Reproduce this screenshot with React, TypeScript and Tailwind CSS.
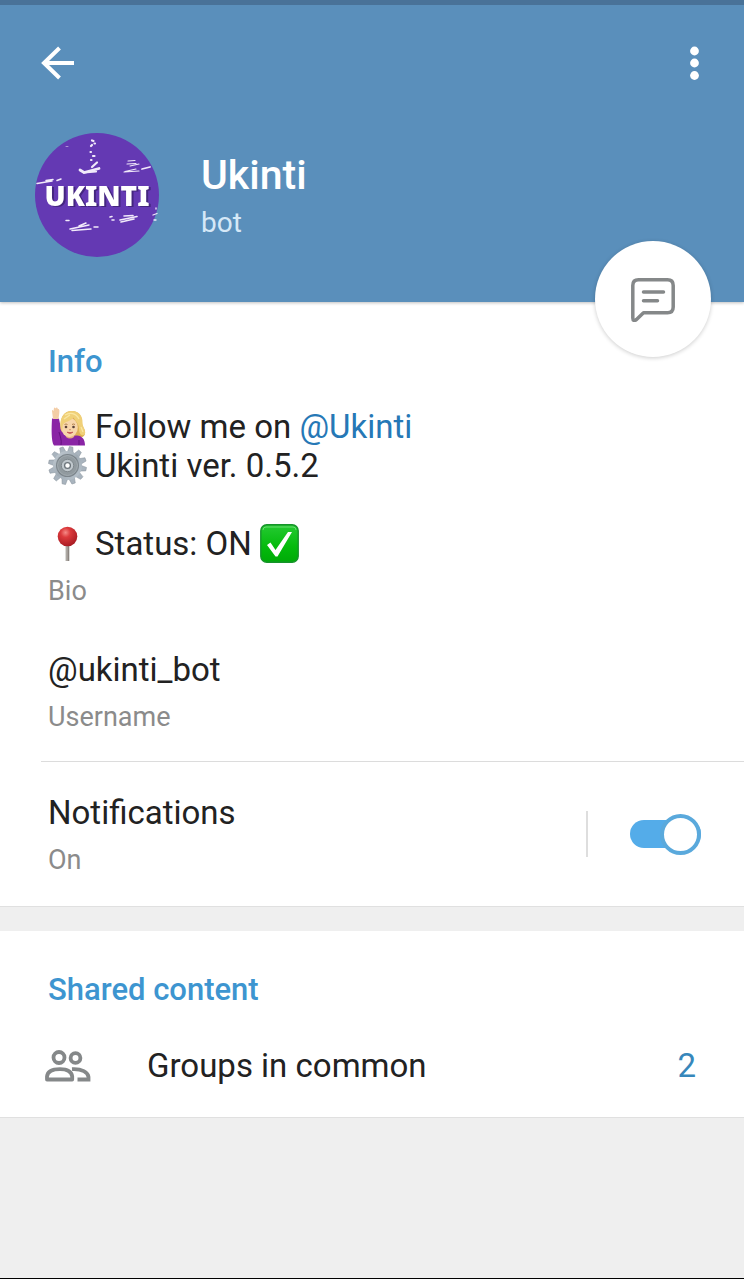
import { useState, type ReactNode } from 'react';

function BackIcon() {
  return (
    <svg className="h-9 w-9" viewBox="0 0 36 36" fill="none" stroke="currentColor" strokeWidth="4">
      <path d="M4 18H34M19.5 3L4 18L19.5 33" />
    </svg>
  );
}

function DotsIcon() {
  return (
    <svg className="h-9 w-9" viewBox="0 0 36 36" fill="currentColor">
      <circle cx="18.5" cy="6" r="4.4" />
      <circle cx="18.5" cy="18" r="4.4" />
      <circle cx="18.5" cy="30.5" r="4.4" />
    </svg>
  );
}

function MessageIcon() {
  return (
    <svg
      className="h-11 w-11"
      viewBox="0 0 44 44"
      fill="none"
      stroke="currentColor"
      strokeWidth="3.5"
      strokeLinecap="round"
      strokeLinejoin="round"
    >
      <path d="M7.5 1.8H36.5Q42.2 1.8 42.2 7.5V29Q42.2 34.700 36.500 34.700H12.500L5.500 41.500Q1.800 44 1.800 40V7.500Q1.800 1.800 7.500 1.800Z" />
      <path d="M12.500 14H32.500M12.500 22.800H26.500" />
    </svg>
  );
}

function GroupIcon() {
  return (
    <svg className="h-8 w-[46px]" viewBox="0 0 46 32" fill="none" stroke="currentColor" strokeWidth="3.8">
      <circle cx="14" cy="7.5" r="5.5" />
      <circle cx="30.5" cy="8" r="4.900" />
      <path d="M2 29.500V26.500C2.500 21.500 8 19.200 15 19.200S26.500 21.500 27.200 26.500V29.500Z" strokeLinejoin="round" />
      <path d="M27 19.200C37 18.600 43 22.500 43.500 27V29.500H32.500" />
    </svg>
  );
}

function Avatar() {
  return (
    <svg className="h-[124px] w-[124px] shrink-0" viewBox="0 0 124 124" role="img" aria-label="Ukinti">
      <circle cx="62" cy="62" r="62" fill="#6439b3" />
      <g fill="none" stroke="#f1eafa" strokeLinecap="round">
        <path d="M45 37L49 39.500L64 35.500" strokeWidth="2.800" />
        <path d="M57 34L62 29.500M49 39.500L61 38.500" strokeWidth="2.200" />
        <path d="M57 7.500L58.500 8M59.500 10.500H60M56 13L57 12M55.500 19H56M58 23H59.500M56 27H56.500" strokeWidth="2.200" />
        <path d="M93 28L100 27.500M92 31L101 30.500M95 33L104 31M90 38.500L101 36M89 39L104 38" strokeWidth="1.100" />
        <path d="M107 36L115 34" strokeWidth="1.800" />
        <path d="M2 50.500L17 48M11 47.500L18 46.500M22 47.500L26 46" strokeWidth="1.500" />
        <path d="M31 87.500H34M44 93L51 90M35 96L54 92M37 97.500L56 96M59 94H63" strokeWidth="1.500" />
        <path d="M75 84L77 83.500M77 87H79M85 87L102 83.500M86 89L99 86M89 83L98 82.500" strokeWidth="1.600" />
        <path d="M118 82L122 80.500M119 87H121M121 76V75" strokeWidth="1.300" />
        <path d="M31 13.500H33" strokeWidth="1" opacity="0.5" />
      </g>
      <text
        x="62"
        y="73"
        textAnchor="middle"
        fontSize="28"
        fill="#ffffff"
        className="font-['Noto_Sans',sans-serif] font-black drop-shadow-[2px_1px_0_#44267f]"
      >
        UKINTI
      </text>
    </svg>
  );
}

function RaisedHandEmoji() {
  return (
    <svg className="h-[39px] w-[39px] shrink-0" viewBox="0 0 39 39" role="img" aria-label="Woman raising hand">
      <path d="M13 20C12 10 16 4 24 4C31 4 34 9 34 15C34 21 38 22 37 27C36 31 31 31 27 31L14 27Z" fill="#dfb055" />
      <path d="M4 12C6 10 9 10 11 12L13 21C14 25 17 28 21 29L29 28.500C34 29 37 32 37 38.500H6C3 35 3.500 20 4 12Z" fill="#8a25a5" />
      <path d="M11 25C12 29 14 33 13 38M31 33V38" fill="none" stroke="#65127f" strokeWidth="1" />
      <path d="M5 12L4 4Q4 2 5.500 4L6 1Q7 0 7.500 1.500L8.500 0.500Q9.800 0 9.800 2L10.800 2Q11.800 3 11.300 6L10.500 12Z" fill="#f3cda6" />
      <path d="M17 26H27L26 30Q22 33 18 30Z" fill="#e5ae80" />
      <ellipse cx="21.500" cy="20.500" rx="8.300" ry="9.700" fill="#f8d6ab" />
      <path d="M12.500 22C11 11 16 4 24 4C31 4 35 9 34.500 16C34.500 20 38 22 37 27C34 30 31 27 31 22C31 17 28 15 25.500 10.500C22 15 17 14 14.800 18L14 25Z" fill="#f0d078" />
      <path d="M17 8C22 5 28 6 31 12M16 12L22 8M33 20L35 25" fill="none" stroke="#fae7a2" strokeWidth="1.300" />
      <circle cx="18" cy="20" r="1.300" fill="#594037" />
      <circle cx="25.500" cy="20" r="1.300" fill="#594037" />
      <path d="M16.500 17.500Q18 16.500 19.500 17.500M24 17.500Q25.500 16.500 27 17.500" fill="none" stroke="#a97845" strokeWidth="0.900" />
      <path d="M21 22.500Q22 23.300 23 22.500" fill="none" stroke="#cc9368" strokeWidth="0.900" />
      <path d="M19 25.200Q22 27.800 25 25.200Q22 26 19 25.200Z" fill="#bd4c4b" stroke="#bd4c4b" strokeWidth="0.600" />
    </svg>
  );
}

function GearEmoji() {
  const teeth = Array.from({ length: 12 }, (_, i) => i * 30 + 12);
  return (
    <svg className="h-[39px] w-[39px] shrink-0" viewBox="0 0 39 39" role="img" aria-label="Gear">
      <defs>
        <linearGradient id="gear" x1="0" y1="0" x2="1" y2="1">
          <stop offset="0" stopColor="#c6cfd6" />
          <stop offset="0.5" stopColor="#a0abb4" />
          <stop offset="1" stopColor="#bcc7d0" />
        </linearGradient>
      </defs>
      {teeth.map((angle) => (
        <path
          key={angle}
          d="M16.5 7L17.500 0.500H21L22.500 7Z"
          fill="#a9b4be"
          stroke="#87929b"
          strokeWidth="0.5"
          transform={`rotate(${angle} 19.5 19.5)`}
        />
      ))}
      <circle cx="19.5" cy="19.5" r="14.5" fill="url(#gear)" />
      <circle cx="19.5" cy="19.5" r="11.5" fill="#7c858b" />
      <circle cx="19.5" cy="19.5" r="10" fill="#919a9f" stroke="#a9b2b8" strokeWidth="0.8" />
      <circle cx="19.5" cy="19.5" r="6.2" fill="#bfc7cc" stroke="#737c82" strokeWidth="0.8" />
      <circle cx="19.5" cy="19.5" r="2.900" fill="#ffffff" stroke="#6a7379" strokeWidth="1.3" />
    </svg>
  );
}

function PinEmoji() {
  return (
    <svg className="h-[39px] w-[39px] shrink-0" viewBox="0 0 39 39" role="img" aria-label="Pin">
      <defs>
        <radialGradient id="pin" cx="0.4" cy="0.3" r="0.7">
          <stop offset="0" stopColor="#f58a86" />
          <stop offset="0.35" stopColor="#dc3a3c" />
          <stop offset="1" stopColor="#a91c24" />
        </radialGradient>
      </defs>
      <path d="M17.700 18H21.300V37H17.700Z" fill="#8b8580" />
      <path d="M18.300 20H19.500V37H18.300Z" fill="#bdb8b3" />
      <circle cx="19.500" cy="12.500" r="9.800" fill="url(#pin)" />
    </svg>
  );
}

function CheckEmoji() {
  return (
    <svg className="h-[39px] w-[39px] shrink-0" viewBox="0 0 39 39" role="img" aria-label="Check mark">
      <defs>
        <linearGradient id="check" x1="0" y1="0" x2="0" y2="1">
          <stop offset="0" stopColor="#25ca32" />
          <stop offset="0.6" stopColor="#04ba0c" />
          <stop offset="1" stopColor="#00aa08" />
        </linearGradient>
      </defs>
      <rect x="0.800" y="0.800" width="37.400" height="37.400" rx="6" fill="url(#check)" stroke="#16942a" strokeWidth="1.400" />
      <path d="M3 6Q3 3 6 3H33Q36 3 36 6" fill="none" stroke="#7be280" strokeWidth="0.800" />
      <path d="M7 21L10.500 18.500L15.500 26L28 8H32L17.500 32.500H15.500Z" fill="#ffffff" />
    </svg>
  );
}

function Field({ label, children }: { label: string; children: ReactNode }) {
  return (
    <div>
      <div className="text-[33px] leading-[39px] text-[#222222]">{children}</div>
      <p className="mt-[13px] text-[27px] leading-[30px] text-[#8b8b8b]">{label}</p>
    </div>
  );
}

function Header() {
  return (
    <header className="relative border-t-[5px] border-[#497298] bg-[#5a8fbb] pb-[45px] text-white shadow-[0_1px_3px_rgba(0,0,0,0.25)]">
      <div className="flex h-[116px] items-center justify-between pr-8 pl-10">
        <button type="button" aria-label="Back">
          <BackIcon />
        </button>
        <button type="button" aria-label="More options">
          <DotsIcon />
        </button>
      </div>
      <div className="mt-3 flex items-center gap-[42px] pl-[35px]">
        <Avatar />
        <div>
          <h1 className="text-[41px] leading-[48px] font-medium">Ukinti</h1>
          <p className="mt-2 text-[28px] leading-8 text-[#d5e8f7]">bot</p>
        </div>
      </div>
      <button
        type="button"
        aria-label="Send message"
        className="absolute right-[33px] -bottom-[55px] flex h-[116px] w-[116px] items-center justify-center rounded-full bg-white pt-0.5 text-[#858889] shadow-[0_1px_4px_rgba(0,0,0,0.2)]"
      >
        <MessageIcon />
      </button>
    </header>
  );
}

export default function App() {
  const [notifications, setNotifications] = useState(true);

  return (
    <div className="flex min-h-screen flex-col border-b border-black bg-[#efefef] font-[Roboto,sans-serif]">
      <Header />
      <main>
        <section className="border-b border-[#e0e0e0] bg-white pt-[42px]">
          <div className="px-12">
            <h2 className="text-[31px] leading-9 font-medium text-[#3d95d0]">Info</h2>
            <div className="mt-[27px]">
              <Field label="Bio">
                <p className="flex items-center gap-2">
                  <RaisedHandEmoji />
                  <span>
                    Follow me on{' '}
                    <a href="#ukinti" className="text-[#2678b6]">
                      @Ukinti
                    </a>
                  </span>
                </p>
                <p className="flex items-center gap-2">
                  <GearEmoji />
                  Ukinti ver. 0.5.2
                </p>
                <p className="mt-[39px] flex items-center gap-2">
                  <PinEmoji />
                  Status: ON
                  <CheckEmoji />
                </p>
              </Field>
            </div>
            <div className="mt-11">
              <Field label="Username">@ukinti_bot</Field>
            </div>
          </div>
          <label className="mt-[29px] ml-[41px] flex cursor-pointer items-center justify-between border-t border-[#dcdcdc] pt-[31px] pr-[43px] pb-[31px] pl-[7px]">
            <Field label={notifications ? 'On' : 'Off'}>Notifications</Field>
            <span className="flex h-[46px] items-center border-l-2 border-[#dedede] pl-[42px]">
              <input
                type="checkbox"
                className="peer sr-only"
                checked={notifications}
                onChange={(e) => setNotifications(e.target.checked)}
              />
              <span className="flex h-7 w-[71px] items-center rounded-full bg-[#b5b5b5] peer-checked:justify-end peer-checked:bg-[#54ace9]">
                <span className="h-[41px] w-[41px] shrink-0 rounded-full border-4 border-[#5aa9dc] bg-white" />
              </span>
            </span>
          </label>
        </section>
        <section className="mt-6 border-b border-[#e0e0e0] bg-white px-12 pt-[41px] pb-8">
          <h2 className="text-[31px] leading-9 font-medium text-[#3d95d0]">Shared content</h2>
          <a href="#groups" className="mt-[38px] -ml-[3px] flex items-center text-[33px] leading-[39px] text-[#222222]">
            <span className="text-[#858889]">
              <GroupIcon />
            </span>
            <span className="ml-14 flex-1">Groups in common</span>
            <span className="text-[#3787bb]">2</span>
          </a>
        </section>
      </main>
    </div>
  );
}
